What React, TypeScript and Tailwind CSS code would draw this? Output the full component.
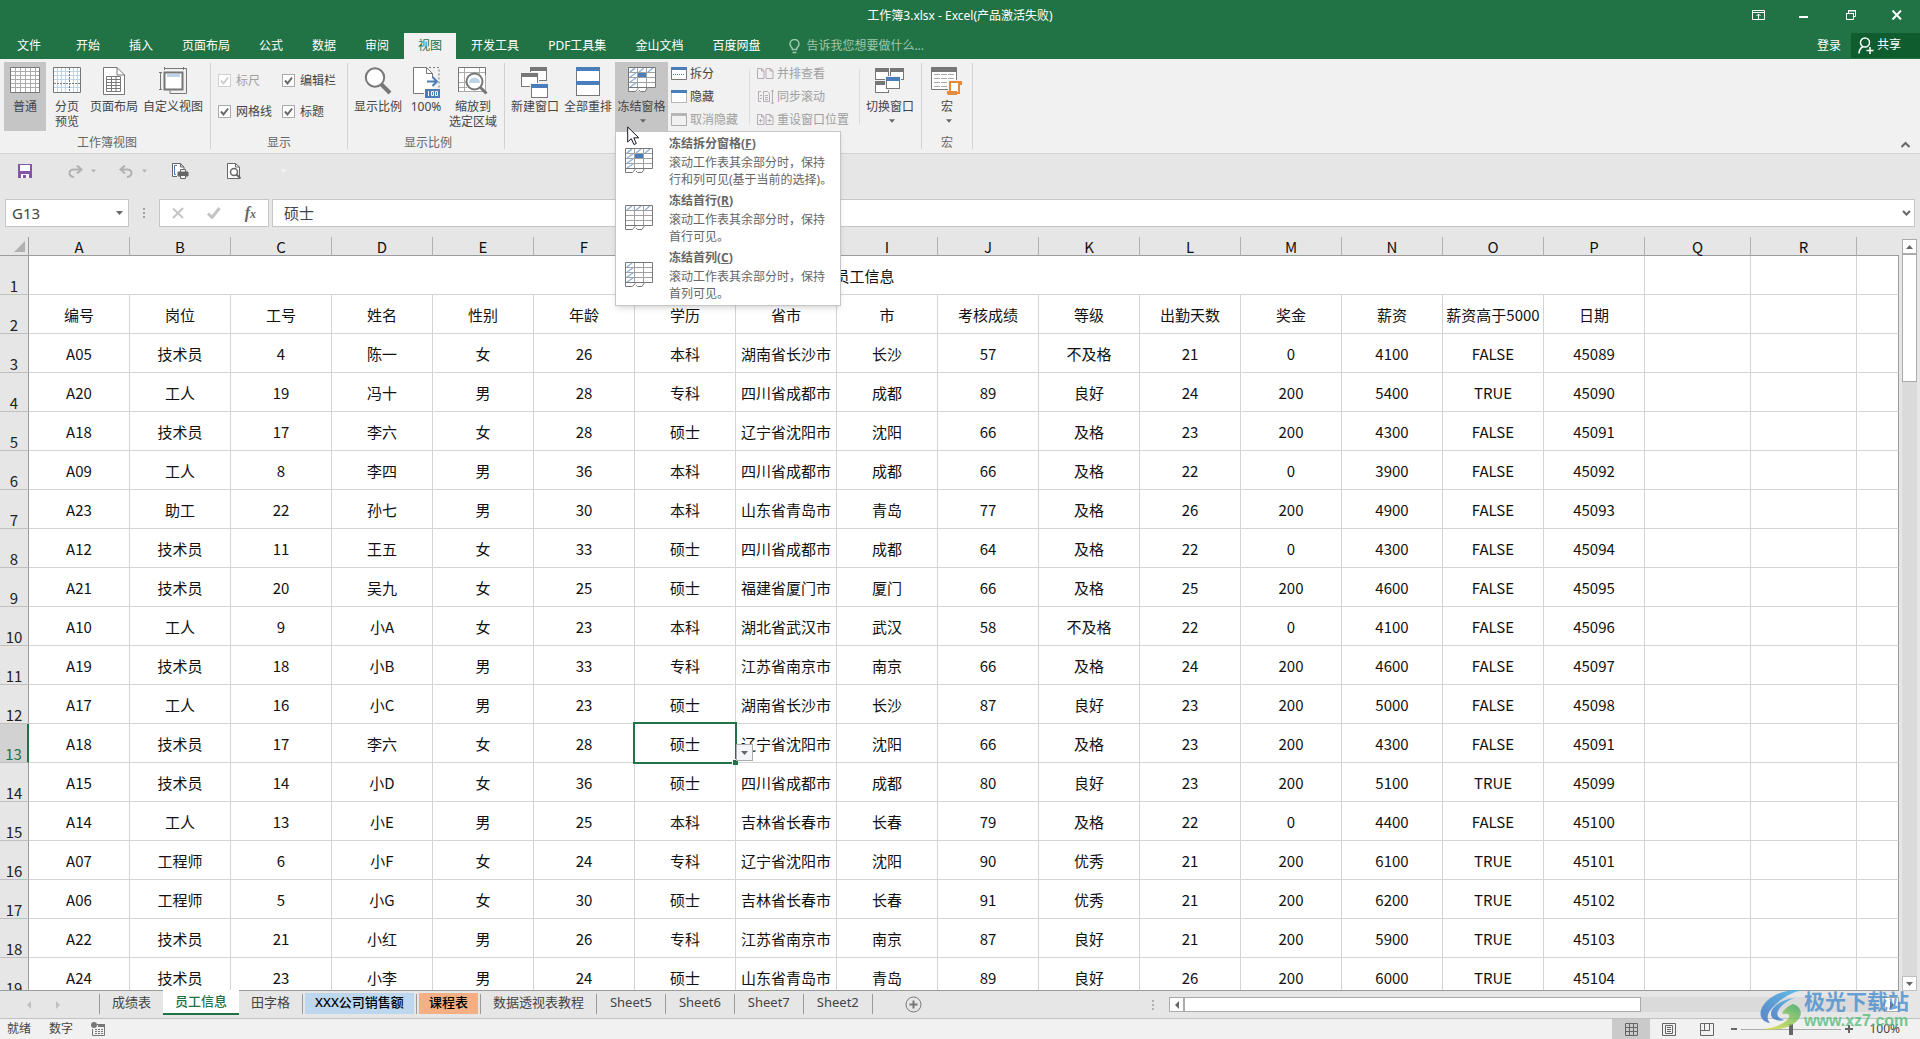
import type { ReactNode } from "react";

const menuTabs = ["开始", "插入", "页面布局", "公式", "数据", "审阅", "视图", "开发工具", "PDF工具集", "金山文档", "百度网盘"];

const headers = ["编号", "岗位", "工号", "姓名", "性别", "年龄", "学历", "省市", "市", "考核成绩", "等级", "出勤天数", "奖金", "薪资", "薪资高于5000", "日期"];

const records = [
  "A05,技术员,4,陈一,女,26,本科,湖南省长沙市,长沙,57,不及格,21,0,4100,FALSE,45089",
  "A20,工人,19,冯十,男,28,专科,四川省成都市,成都,89,良好,24,200,5400,TRUE,45090",
  "A18,技术员,17,李六,女,28,硕士,辽宁省沈阳市,沈阳,66,及格,23,200,4300,FALSE,45091",
  "A09,工人,8,李四,男,36,本科,四川省成都市,成都,66,及格,22,0,3900,FALSE,45092",
  "A23,助工,22,孙七,男,30,本科,山东省青岛市,青岛,77,及格,26,200,4900,FALSE,45093",
  "A12,技术员,11,王五,女,33,硕士,四川省成都市,成都,64,及格,22,0,4300,FALSE,45094",
  "A21,技术员,20,吴九,女,25,硕士,福建省厦门市,厦门,66,及格,25,200,4600,FALSE,45095",
  "A10,工人,9,小A,女,23,本科,湖北省武汉市,武汉,58,不及格,22,0,4100,FALSE,45096",
  "A19,技术员,18,小B,男,33,专科,江苏省南京市,南京,66,及格,24,200,4600,FALSE,45097",
  "A17,工人,16,小C,男,23,硕士,湖南省长沙市,长沙,87,良好,23,200,5000,FALSE,45098",
  "A18,技术员,17,李六,女,28,硕士,辽宁省沈阳市,沈阳,66,及格,23,200,4300,FALSE,45091",
  "A15,技术员,14,小D,女,36,硕士,四川省成都市,成都,80,良好,23,200,5100,TRUE,45099",
  "A14,工人,13,小E,男,25,本科,吉林省长春市,长春,79,及格,22,0,4400,FALSE,45100",
  "A07,工程师,6,小F,女,24,专科,辽宁省沈阳市,沈阳,90,优秀,21,200,6100,TRUE,45101",
  "A06,工程师,5,小G,女,30,硕士,吉林省长春市,长春,91,优秀,21,200,6200,TRUE,45102",
  "A22,技术员,21,小红,男,26,专科,江苏省南京市,南京,87,良好,21,200,5900,TRUE,45103",
  "A24,技术员,23,小李,男,24,硕士,山东省青岛市,青岛,89,良好,26,200,6000,TRUE,45104",
].map((line) => line.split(","));

const columns = "ABCDEFGHIJKLMNOPQR".split("");

const sheets = [
  { name: "成绩表", style: "px-[10px]" },
  { name: "员工信息", style: "" },
  { name: "田字格", style: "px-[10px]" },
  { name: "XXX公司销售额", style: "bg-[#bdd7ee] px-[10px] text-black font-medium" },
  { name: "课程表", style: "bg-[#f4b084] px-[10px] text-black font-medium" },
  { name: "数据透视表教程", style: "px-[10px]" },
  { name: "Sheet5", style: "px-[11px]" },
  { name: "Sheet6", style: "px-[11px]" },
  { name: "Sheet7", style: "px-[11px]" },
  { name: "Sheet2", style: "px-[11px]" },
];

/* ---------- icons ---------- */

function NormalIcon() {
  return (
    <svg width="30" height="26" viewBox="0 0 30 26" fill="none">
      <path d="M.5.5h29v25H.5z" fill="#fff" />
      <path d="M5.5 1v24M10.5 1v24M15.5 1v24M20.5 1v24M25.5 1v24M1 4.5h28M1 8.5h28M1 12.5h28M1 16.5h28M1 20.5h28" stroke="#ababab" />
      <path d="M.5.5h29v25H.5z" stroke="#777" />
    </svg>
  );
}

function PageBreakIcon() {
  return (
    <svg width="28" height="26" viewBox="0 0 28 26" fill="none">
      <path d="M.5.5h27v25H.5z" fill="#fff" />
      <path d="M4.5 1v24M8.5 1v24M12.5 1v24M20.5 1v24M24.5 1v24M1 4.5h26M1 8.5h26M1 12.5h26M1 20.5h26" stroke="#bcd3ea" />
      <path d="M16.5 1v24M1 16.5h26" stroke="#777" strokeDasharray="2 1" />
      <path d="M.5.5h27v25H.5z" stroke="#777" />
    </svg>
  );
}

function PageLayoutIcon() {
  return (
    <svg width="22" height="28" viewBox="0 0 22 28" fill="none" stroke="#777">
      <path d="M.5.5H14l7.5 7.5v19.500H.5z" fill="#fff" />
      <path d="M14 .5V8h7.500" />
      <path d="M3.500 9.500h14v15h-14zM8.500 9.500v15M13 9.500v15M3.500 12.500h14M3.500 15.500h14M3.500 18.500h14M3.500 21.500h14" />
    </svg>
  );
}

function CustomViewIcon() {
  return (
    <svg width="28" height="28" viewBox="0 0 28 28" fill="none" stroke="#777">
      <path d="M5 1.500h20M5.500 0v3M24.500 0v3M1.500 5v17M0 5.500h3M0 22.500h3" />
      <path d="M24 1.500h3.500v25H11v-3" />
      <path d="M5.500 5.500h18v17h-18z" fill="#fff" strokeWidth="2" />
      <path d="M8 7h13v3H8z" fill="#bcd3ea" stroke="none" />
    </svg>
  );
}

function ZoomIcon() {
  return (
    <svg width="28" height="28" viewBox="0 0 28 28" fill="none" stroke="#777">
      <circle cx="11" cy="10.500" r="9.200" strokeWidth="2" fill="#fff" />
      <path d="M17.500 17.500l8.500 8.500" strokeWidth="4" />
    </svg>
  );
}

function HundredIcon() {
  return (
    <svg width="28" height="32" viewBox="0 0 28 32" fill="none" stroke="#777">
      <path d="M1.500.5h13l6 6v20h-19z" fill="#fff" stroke="none" />
      <path d="M12 26.500H1.500V.5h13l6 6V11M14.500.5v6h6" />
      <path d="M17 .5h10v22" strokeDasharray="2 2" />
      <path d="M15 14.500h9M20.500 10l4.500 4.500-4.500 4.500" stroke="#4a7ebb" strokeWidth="2" />
      <path d="M13 22h15v9H13z" fill="#4a7ebb" stroke="none" />
      <path d="M16.500 24v5M19.500 24.500h2v4h-2zM23.500 24.500h2v4h-2z" stroke="#fff" />
    </svg>
  );
}

function ZoomSelectionIcon() {
  return (
    <svg width="30" height="28" viewBox="0 0 30 28" fill="none" stroke="#777">
      <path d="M.5.5h27v24H.5z" fill="#fff" stroke="#aaa" />
      <path d="M6.500 1v24M21.500 1v6M1 5.500h27M1 15.500h7M1 20.500h8" stroke="#aaa" />
      <path d="M.5 25V.5h27V8" />
      <circle cx="16.500" cy="14.500" r="8" fill="#fff" strokeWidth="2" />
      <path d="M11 16a5.500 5.500 0 0 1 11 0z" fill="#bcd3ea" stroke="none" />
      <path d="M22 20l6.500 6.500" strokeWidth="3" />
    </svg>
  );
}

function Window({ x, y, w, h, bar }: { x: number; y: number; w: number; h: number; bar: string }) {
  return (
    <g>
      <rect x={x + 0.5} y={y + 0.5} width={w - 1} height={h - 1} fill="#fff" stroke="#777" />
      <rect x={x} y={y} width={w} height="4" fill={bar} />
    </g>
  );
}

function NewWindowIcon() {
  return (
    <svg width="28" height="31" viewBox="0 0 28 31">
      <Window x={9} y={0} w={17} h={14} bar="#777" />
      <rect x="0" y="5" width="18" height="15" fill="#f1f1f1" />
      <Window x={0} y={6} w={17} h={14} bar="#777" />
      <rect x="9" y="16" width="18" height="15" fill="#f1f1f1" />
      <Window x={10} y={17} w={17} h={14} bar="#4a7ebb" />
    </svg>
  );
}

function ArrangeIcon() {
  return (
    <svg width="24" height="29" viewBox="0 0 24 29">
      <Window x={0} y={0} w={24} h={15} bar="#4a7ebb" />
      <Window x={0} y={14} w={24} h={15} bar="#4a7ebb" />
    </svg>
  );
}

function SwitchIcon() {
  return (
    <svg width="30" height="26" viewBox="0 0 30 26">
      <Window x={0} y={1} w={14} h={12} bar="#777" />
      <Window x={15} y={1} w={14} h={12} bar="#777" />
      <Window x={0} y={14} w={14} h={12} bar="#777" />
      <rect x="10" y="9" width="16" height="14" fill="#f1f1f1" />
      <Window x={11} y={10} w={14} h={12} bar="#4a7ebb" />
    </svg>
  );
}

function MacroIcon() {
  return (
    <svg width="32" height="29" viewBox="0 0 32 29" fill="none">
      <path d="M.5.5h25v22H.5z" fill="#fff" stroke="#777" />
      <path d="M0 0h26v5H0z" fill="#777" />
      <path d="M3 7.500h20M3 11.500h20M3 15.500h13M3 19.500h13" stroke="#aaa" strokeDasharray="6 1" />
      <path d="M17 13h13v11H17z" fill="#f1f1f1" />
      <path d="M19 15h9v11h-9z" fill="#fff" stroke="#e68b3c" strokeWidth="2" />
      <path d="M28 14h3v4h-2M16 24h10v4H17l-1-1z" fill="#e68b3c" />
    </svg>
  );
}

function FreezeIcon({ rows, cols }: { rows?: boolean; cols?: boolean }) {
  return (
    <svg width="28" height="25" viewBox="0 0 28 25" fill="none">
      <path d="M.5.5h27v20H19l-2 4h-5l-1.500-1-2 1H.5z" fill="#fff" />
      <path d="M9.500 1v20M18.500 1v20M1 5.500h27M1 10.500h27M1 15.500h27" stroke="#a0a0a0" />
      {rows && <path d="M2 5l5-4M11 5l5-4M20 5l5-4" stroke="#8fb2d9" strokeWidth="1.500" />}
      {cols && <path d="M2 5l5-4M2 10l6-4M2 15l6-4M2 20l6-4" stroke="#8fb2d9" strokeWidth="1.500" />}
      {rows && cols && <path d="M10 6h8v4h-8z" fill="#4a7ebb" />}
      <path d="M.5 24.500V.5h27v20H19.500l-2.500 4h-4.500l-1.500-1.500M.5 20.500h19M.5 24.500h7l3-3.500" stroke="#777" />
    </svg>
  );
}

function SmallWindowIcon({ kind }: { kind: string }) {
  const bar = kind === "unhide" ? "#b5b5b5" : "#4a7ebb";
  return (
    <svg width="16" height="13" viewBox="0 0 16 13" fill="none">
      <path d="M.5.5h15v12H.5z" fill={kind === "unhide" ? "#f1f1f1" : "#fff"} stroke={kind === "unhide" ? "#aaa" : "#777"} strokeDasharray={kind === "hide" ? "1 1" : undefined} />
      <path d="M0 0h16v3H0z" fill={bar} />
      {kind === "split" && <path d="M2 7.500h12" stroke="#4a7ebb" strokeDasharray="1 1" />}
    </svg>
  );
}

function PagesIcon({ kind }: { kind: string }) {
  return (
    <svg width="17" height="14" viewBox="0 0 17 14" fill="none" stroke="#b3acb3">
      {kind === "sync" ? (
        <>
          <path d="M4 1.500H1.500v10H4M6.500 1.500h4l2 2v8h-6zM8 5.500h3M8 7.500h3M8 9.500h3M3 5.500h2M3 8.500h2" />
          <path d="M15.500 0v14M14 1.500l1.500-1.500 1 1.500M14 12.500l1.500 1.500 1-1.500" />
        </>
      ) : (
        <path d="M.5 1.500h4l2.500 2v8H.5zM9 1.500h4l3 2v8H9zM4.500 1.500v2.500H7M13 1.500v2.500h3" />
      )}
      {kind === "reset" && <path d="M2 7.500h3.500M3.500 6v3.500M10.500 7.500h4M12.500 6v3.500" />}
    </svg>
  );
}

function Arrow({ className = "text-[#666]", up }: { className?: string; up?: boolean }) {
  return (
    <svg width="7" height="4" viewBox="0 0 7 4" className={className} fill="currentColor">
      <path d={up ? "M0 4h7L3.500 0z" : "M0 0h7L3.500 4z"} />
    </svg>
  );
}

/* ---------- ribbon ---------- */

function Group({ label, className, children }: { label?: string; className: string; children: ReactNode }) {
  return (
    <div className={`relative mt-1 flex h-[86px] shrink-0 flex-col border-r border-[#d2d2d2] ${className}`}>
      <div className="-mt-px flex h-[69px] shrink-0">{children}</div>
      {label && <div className="-mb-1 pt-1 text-center leading-4 text-[#666]">{label}</div>}
    </div>
  );
}

interface BigButtonProps {
  icon: ReactNode;
  lines: string[];
  width: string;
  active?: boolean;
  arrow?: boolean;
}

function BigButton({ icon, lines, width, active, arrow }: BigButtonProps) {
  return (
    <button type="button" className={`flex h-[69px] shrink-0 flex-col items-center whitespace-nowrap ${width} ${active ? "bg-[#c5c5c5]" : ""}`}>
      <span className="flex h-[37px] items-start pt-[5px]">{icon}</span>
      {lines.map((line) => (
        <span key={line} className="leading-[15px]">{line}</span>
      ))}
      {arrow && <span className="flex h-[14px] items-center pl-[3px]"><Arrow className="w-[6px] text-[#666]" /></span>}
    </button>
  );
}

function Check({ label, disabled, width }: { label: string; disabled?: boolean; width: string }) {
  return (
    <label className={`flex h-[31px] items-center gap-[5px] whitespace-nowrap ${width} ${disabled ? "text-[#a0a0a0]" : ""}`}>
      <span className="relative flex h-[13px] w-[13px]">
        <input type="checkbox" defaultChecked disabled={disabled} className={`h-[13px] w-[13px] appearance-none border bg-white ${disabled ? "border-[#d0d0d0]" : "border-[#ababab]"}`} />
        <svg className="pointer-events-none absolute inset-0" width="13" height="13" viewBox="0 0 13 13" fill="none" stroke={disabled ? "#ccc" : "#666"} strokeWidth="2">
          <path d="M3 6.500L5.500 9.500L10 3.500" />
        </svg>
      </span>
      {label}
    </label>
  );
}

function SmallButton({ icon, label, disabled }: { icon: ReactNode; label: string; disabled?: boolean }) {
  return (
    <button type="button" disabled={disabled} className={`flex h-[23px] shrink-0 items-center gap-[3px] whitespace-nowrap ${disabled ? "text-[#a0a0a0]" : ""}`}>
      {icon}
      {label}
    </button>
  );
}

function FreezeMenu() {
  const items = [
    { name: "冻结拆分窗格", hot: "F", desc: ["滚动工作表其余部分时，保持", "行和列可见(基于当前的选择)。"], rows: true, cols: true },
    { name: "冻结首行", hot: "R", desc: ["滚动工作表其余部分时，保持", "首行可见。"], rows: true, cols: false },
    { name: "冻结首列", hot: "C", desc: ["滚动工作表其余部分时，保持", "首列可见。"], rows: false, cols: true },
  ];
  return (
    <div role="menu" className="absolute left-[110px] top-[68px] z-20 w-[226px] border border-[#c6c6c6] bg-white pb-0.5 shadow-md">
      {items.map((item) => (
        <button type="button" role="menuitem" key={item.name} className="flex h-[57px] w-full pl-[9px] pt-[3px] text-left text-[#666]">
          <span className="w-11 shrink-0 pt-[13px]">
            <FreezeIcon rows={item.rows} cols={item.cols} />
          </span>
          <span className="whitespace-nowrap">
            <span className="mb-px block font-bold leading-[18px]">
              {item.name}(<u>{item.hot}</u>)
            </span>
            {item.desc.map((line) => (
              <span key={line} className="block leading-[17px]">{line}</span>
            ))}
          </span>
        </button>
      ))}
      {/* mouse pointer */}
      <svg className="absolute left-[11px] -top-[6px]" width="13" height="20" viewBox="0 0 13 20" fill="#fff" stroke="#1a1a2a">
        <path d="M.7 1v15l3.600-3.300 2.600 5.800 2.400-1-2.500-5.700h5z" />
      </svg>
    </div>
  );
}

function Ribbon() {
  return (
    <div className="flex h-[95px] border-b border-[#d2d2d2] bg-[#f1f1f1] text-xs text-[#444]">
      <Group label="工作簿视图" className="w-[211px] pl-1">
        <BigButton icon={<NormalIcon />} lines={["普通"]} width="w-[42px]" active />
        <BigButton icon={<PageBreakIcon />} lines={["分页", "预览"]} width="w-[42px]" />
        <BigButton icon={<PageLayoutIcon />} lines={["页面布局"]} width="w-[52px]" />
        <BigButton icon={<CustomViewIcon />} lines={["自定义视图"]} width="w-[66px]" />
      </Group>
      <Group label="显示" className="w-[137px]">
        <div className="flex flex-wrap content-start pl-[7px] pt-[3px]">
          <Check label="标尺" width="w-16" disabled />
          <Check label="编辑栏" width="w-16" />
          <Check label="网格线" width="w-16" />
          <Check label="标题" width="w-16" />
        </div>
      </Group>
      <Group label="显示比例" className="w-[157px] pl-1">
        <BigButton icon={<ZoomIcon />} lines={["显示比例"]} width="w-[52px]" />
        <BigButton icon={<HundredIcon />} lines={["100%"]} width="w-11" />
        <BigButton icon={<ZoomSelectionIcon />} lines={["缩放到", "选定区域"]} width="w-[50px]" />
      </Group>
      <Group className="w-[417px] pl-1">
        <BigButton icon={<NewWindowIcon />} lines={["新建窗口"]} width="w-[52px]" />
        <BigButton icon={<ArrangeIcon />} lines={["全部重排"]} width="w-[54px]" />
        <BigButton icon={<FreezeIcon rows cols />} lines={["冻结窗格"]} width="w-[53px]" active arrow />
        <div className="flex w-[81px] flex-col pl-[3px]">
          <SmallButton icon={<SmallWindowIcon kind="split" />} label="拆分" />
          <SmallButton icon={<SmallWindowIcon kind="hide" />} label="隐藏" />
          <SmallButton icon={<SmallWindowIcon kind="unhide" />} label="取消隐藏" disabled />
        </div>
        <div className="my-[7px] flex w-[111px] flex-col justify-center border-x border-[#dcdcdc] pl-[7px]">
          <SmallButton icon={<PagesIcon kind="side" />} label="并排查看" disabled />
          <SmallButton icon={<PagesIcon kind="sync" />} label="同步滚动" disabled />
          <SmallButton icon={<PagesIcon kind="reset" />} label="重设窗口位置" disabled />
        </div>
        <div className="ml-1">
          <BigButton icon={<SwitchIcon />} lines={["切换窗口"]} width="w-[52px]" arrow />
        </div>
        <FreezeMenu />
      </Group>
      <Group label="宏" className="w-[51px]">
        <BigButton icon={<MacroIcon />} lines={["宏"]} width="w-[50px]" arrow />
      </Group>
      <button type="button" aria-label="折叠功能区" className="mb-1 ml-auto mr-[9px] self-end p-px">
        <svg width="9" height="7" viewBox="0 0 9 7" fill="none" stroke="#666" strokeWidth="2">
          <path d="M.5 6L4.500 2L8.500 6" />
        </svg>
      </button>
    </div>
  );
}

/* ---------- top bars ---------- */

function TitleBar() {
  return (
    <div className="grid h-[33px] grid-cols-[1fr_auto_1fr] items-start text-xs leading-8 text-white">
      <span />
      <h1>工作簿3.xlsx - Excel(产品激活失败)</h1>
      <div className="flex h-[30px] items-center justify-end pr-[17px]">
        <button type="button" aria-label="功能区显示选项" className="mr-[29px] p-1">
          <svg width="13" height="10" viewBox="0 0 13 10" fill="none" stroke="#fff">
            <path d="M.5.5h12v9H.5zM1 2.500h11M6.500 4v5M4.500 6l2-2 2 2" />
          </svg>
        </button>
        <button type="button" aria-label="最小化" className="mr-[33px] px-px pt-1">
          <svg width="9" height="2" viewBox="0 0 9 2"><path d="M0 0h9v2H0z" fill="#fff" /></svg>
        </button>
        <button type="button" aria-label="还原" className="mr-[31px] p-1">
          <svg width="10" height="10" viewBox="0 0 10 10" fill="none" stroke="#fff">
            <path d="M2.500 3V1h7v5.500H8M2 .5h8M0 3.500h8M.5 4v5.500h7V4" />
          </svg>
        </button>
        <button type="button" aria-label="关闭">
          <svg width="12" height="10" viewBox="0 0 12 10" fill="none" stroke="#fff" strokeWidth="2">
            <path d="M1.500.5l8.500 9M10 .5l-8.500 9" />
          </svg>
        </button>
      </div>
    </div>
  );
}

function MenuBar() {
  return (
    <div className="flex h-[26px] text-xs leading-6 text-white">
      <button type="button" className="mr-1 w-[58px]">文件</button>
      <div className="flex gap-px">
        {menuTabs.map((tab) => (
          <button type="button" key={tab} className={`whitespace-nowrap px-3.5 ${tab === "视图" ? "bg-[#f1f1f1] text-[#217346]" : ""}`}>{tab}</button>
        ))}
      </div>
      <div className="ml-[15px] flex items-center gap-[6px]">
        <svg width="11" height="15" viewBox="0 0 11 15" fill="none" stroke="#9fc7b0" strokeWidth="1.500">
          <path d="M3.500 10.500c0-2-2.500-3-2.500-5.500a4.500 4.500 0 0 1 9 0c0 2.500-2.500 3.500-2.500 5.500zM3.500 13.500h4" />
        </svg>
        <input aria-label="告诉我" placeholder="告诉我您想要做什么..." className="w-40 bg-transparent placeholder-[#9fc7b0] outline-none" />
      </div>
      <div className="ml-auto flex">
        <button type="button" className="px-[10px]">登录</button>
        <button type="button" className="mb-px flex w-[69px] items-center gap-[3px] bg-[#0f5c2f] pl-[7px]">
          <svg width="16" height="17" viewBox="0 0 16 17" fill="none" stroke="#fff" strokeWidth="1.500">
            <circle cx="7" cy="5.500" r="4.500" />
            <path d="M1 16.500c0-3 1.500-5.500 4-7M8.500 13.500h7M12 10v7" />
          </svg>
          <span className="pb-[2px]">共享</span>
        </button>
      </div>
    </div>
  );
}

function QuickAccess() {
  return (
    <div className="flex h-[45px] items-center pb-[11px] pl-[18px]">
      <button type="button" aria-label="保存" className="mr-9">
        <svg width="14" height="14" viewBox="0 0 14 14">
          <path d="M0 0h14v14H0z" fill="#8555a8" />
          <path d="M2 1h10v6H2zM3 10h8v4H3z" fill="#fff" />
          <path d="M5 11h3v3H5z" fill="#8555a8" />
        </svg>
      </button>
      <button type="button" aria-label="恢复" className="mr-[23px] flex items-center gap-2">
        <svg width="15" height="13" viewBox="0 0 15 13" fill="none" stroke="#b1b1b1" strokeWidth="2">
          <path d="M6 12C0 11.500 0 4.500 6 4.500h7M9 .5l4.500 4L9 8.500" />
        </svg>
        <Arrow className="w-[5px] text-[#b1b1b1]" />
      </button>
      <button type="button" aria-label="撤消" className="mr-[25px] flex items-center gap-2">
        <svg width="15" height="13" viewBox="0 0 15 13" fill="none" stroke="#b1b1b1" strokeWidth="2">
          <path d="M8 12c6-.5 6-7.500 0-7.500H2M6 .5l-4.500 4L6 8.500" />
        </svg>
        <Arrow className="w-[5px] text-[#b1b1b1]" />
      </button>
      <button type="button" aria-label="快速打印" className="mr-[38px]">
        <svg width="17" height="16" viewBox="0 0 17 16" fill="none" stroke="#666">
          <path d="M5 13.500H.5V.5h8L12 4v2M8.500.5V4H12" fill="#fff" />
          <path d="M5 2.500H2.500v9H4" stroke="#4a7ebb" />
          <path d="M8.500 9V6.500h5V9" fill="#fff" />
          <path d="M6 9h10v4H6z" fill="#666" />
          <path d="M8.500 12.500h5v3h-5z" fill="#fff" />
        </svg>
      </button>
      <button type="button" aria-label="打印预览" className="mr-[39px]">
        <svg width="15" height="16" viewBox="0 0 15 16" fill="none" stroke="#666">
          <path d="M.5.5h8L12.500 4v11.500H.5z" fill="#fff" />
          <path d="M8.500.5V4h4" />
          <circle cx="7" cy="9" r="3.500" fill="#fff" strokeWidth="1.500" />
          <path d="M9.500 11.500l4 4" strokeWidth="2" />
        </svg>
      </button>
      <Arrow className="w-[5px] text-[#f6f6f6]" />
    </div>
  );
}

function FormulaBar() {
  return (
    <div className="flex h-[28px] px-[5px] text-[15px] text-[#444]">
      <div className="flex w-[124px] items-center border border-[#c6c6c6] bg-white pr-[5px]">
        <input aria-label="名称框" defaultValue="G13" className="min-w-0 flex-1 pl-[6px] outline-none" />
        <Arrow />
      </div>
      <div className="flex w-[30px] flex-col items-center justify-center gap-[2px]">
        <i className="h-[2px] w-[2px] bg-[#a0a0a0]" />
        <i className="h-[2px] w-[2px] bg-[#a0a0a0]" />
        <i className="h-[2px] w-[2px] bg-[#a0a0a0]" />
      </div>
      <div className="flex w-[110px] items-center justify-between border border-[#c6c6c6] bg-white px-3">
        <button type="button" aria-label="取消">
          <svg width="12" height="12" viewBox="0 0 12 12" fill="none" stroke="#c4c4c4" strokeWidth="2"><path d="M1 1.500l10 9.500M11 1L1 11" /></svg>
        </button>
        <button type="button" aria-label="输入">
          <svg width="14" height="12" viewBox="0 0 14 12" fill="none" stroke="#c4c4c4" strokeWidth="3"><path d="M1 6.500l4 4L12.500 1" /></svg>
        </button>
        <button type="button" className="font-['Liberation_Serif',serif] text-[16px] font-bold italic leading-4 text-[#666]">
          f<span className="text-[12px]">x</span>
        </button>
      </div>
      <div className="ml-[3px] flex flex-1 items-center border border-[#c6c6c6] bg-white pr-[3px]">
        <input aria-label="编辑栏" defaultValue="硕士" className="min-w-0 flex-1 pl-[11px] outline-none" />
        <svg width="9" height="6" viewBox="0 0 9 6" fill="none" stroke="#666" strokeWidth="2"><path d="M1 1l3.500 3.500L8 1" /></svg>
      </div>
    </div>
  );
}

/* ---------- grid ---------- */

const cell = "border-b border-r border-[#d4d4d4] px-0 pb-0 pt-px text-center font-normal whitespace-nowrap";
const lastCell = "border-b border-r border-b-[#d4d4d4] border-r-[#9b9b9b] p-0";

function RowHead({ n }: { n: number }) {
  return (
    <th scope="row" className={`border-b border-b-[#c0c0c0] px-0 pb-px pt-0 text-center align-bottom font-normal leading-none ${n === 13 ? "border-r-2 border-r-[#217346] bg-[#d2d2d2] text-[#217346]" : "border-r border-r-[#9b9b9b] bg-[#e6e6e6] text-[#222]"}`}>
      {n}
    </th>
  );
}

function SelectedCell({ value }: { value: string }) {
  return (
    <td className={`${cell} relative`}>
      {value}
      <span className="absolute -inset-[2px] border-2 border-[#217346]" />
      <span className="absolute -bottom-[3px] -right-[3px] h-[6px] w-[6px] border-l border-t border-white bg-[#217346]" />
      <button type="button" aria-label="选择列表" className="absolute left-full top-5 z-10 ml-px flex h-[17px] w-[17px] items-center justify-center border border-[#ababab] bg-[#f3f5f8]">
        <Arrow />
      </button>
    </td>
  );
}

function Sheet() {
  return (
    <div className="min-w-0 flex-1 overflow-hidden border-b border-[#9b9b9b] pt-[10px]">
      <table className="w-full table-fixed border-separate border-spacing-0 bg-white text-[15px] leading-5 text-[#111]">
        <colgroup>
          <col className="w-[29px]" />
          {columns.map((c) => (
            <col key={c} className={c > "P" ? "w-[106px]" : "w-[101px]"} />
          ))}
          <col />
        </colgroup>
        <thead>
          <tr className="h-[19px] bg-[#e6e6e6]">
            <th className="border-b border-r border-[#9b9b9b] p-0">
              <svg className="ml-auto mr-[3px]" width="11" height="11" viewBox="0 0 11 11"><path d="M11 0v11H0z" fill="#b1b1b1" /></svg>
            </th>
            {columns.map((c) => (
              <th key={c} scope="col" className={`h-[19px] border-b border-r border-b-[#9b9b9b] border-r-[#b1b1b1] p-0 text-center align-bottom font-normal leading-4 ${c === "G" ? "bg-[#d2d2d2] text-[#217346]" : ""}`}>{c}</th>
            ))}
            <th className="border-b border-[#9b9b9b] p-0" />
          </tr>
        </thead>
        <tbody>
          <tr className="h-[39px]">
            <RowHead n={1} />
            <td colSpan={16} className={cell}>XXX公司员工信息</td>
            <td className={cell} />
            <td className={cell} />
            <td className={lastCell} />
          </tr>
          {[headers, ...records].map((row, r) => (
            <tr key={r} className="h-[39px]">
              <RowHead n={r + 2} />
              {row.map((value, c) =>
                r === 11 && c === 6 ? <SelectedCell key={c} value={value} /> : <td key={c} className={cell}>{value}</td>
              )}
              <td className={cell} />
              <td className={cell} />
              <td className={lastCell} />
            </tr>
          ))}
        </tbody>
      </table>
    </div>
  );
}

function VerticalScroll() {
  return (
    <div className="mx-[3px] mt-3 flex w-[15px] flex-col bg-[#dadada]">
      <button type="button" aria-label="向上滚动" className="flex h-[15px] items-center justify-center border border-[#ababab] bg-white"><Arrow up /></button>
      <div className="h-[128px] border border-[#ababab] bg-white" />
      <button type="button" aria-label="向下滚动" className="mt-auto flex h-[15px] items-center justify-center border border-[#c0c0c0] bg-white"><Arrow /></button>
    </div>
  );
}

function SideArrow({ right, className }: { right?: boolean; className: string }) {
  return (
    <svg width="4" height="8" viewBox="0 0 4 8" className={className} fill="currentColor">
      <path d={right ? "M0 0v8l4-4z" : "M4 0v8L0 4z"} />
    </svg>
  );
}

function SheetTabs() {
  return (
    <div className="flex h-[28px] border-b border-[#c0c0c0] text-[13px] text-[#444]">
      <div className="flex w-[100px] items-center gap-[25px] pl-[27px]">
        <SideArrow className="text-[#c0c0c0]" />
        <SideArrow right className="text-[#c0c0c0]" />
      </div>
      {sheets.map((sheet, i) =>
        i === 1 ? (
          <button type="button" key={sheet.name} className="-mt-px h-[25px] w-[76px] border-b-2 border-[#217346] bg-white pb-[2px] font-medium leading-5 text-[#217346]">{sheet.name}</button>
        ) : (
          <div key={sheet.name} className={`my-[3px] flex h-5 border-[#9b9b9b] px-[2px] ${i === 0 ? "-ml-px border-l" : "border-r"}`}>
            <button type="button" className={`-mt-px whitespace-nowrap pb-[3px] leading-[17px] ${sheet.style}`}>{sheet.name}</button>
          </div>
        )
      )}
      <button type="button" aria-label="新工作表" className="ml-[32px]">
        <svg width="17" height="17" viewBox="0 0 17 17" fill="none" stroke="#777">
          <circle cx="8.500" cy="8.500" r="7.500" />
          <path d="M4.500 8.500h8M8.500 4.500v8" strokeWidth="2" />
        </svg>
      </button>
      <div className="ml-auto mt-[6px] flex h-[15px] w-[768px] shrink-0">
        <div className="flex w-[17px] flex-col justify-center gap-[2px]">
          <i className="h-[2px] w-[2px] bg-[#b0b0b0]" />
          <i className="h-[2px] w-[2px] bg-[#b0b0b0]" />
          <i className="h-[2px] w-[2px] bg-[#b0b0b0]" />
        </div>
        <button type="button" aria-label="向左滚动" className="flex w-[15px] items-center justify-center border border-[#ababab] bg-white"><SideArrow className="text-[#666]" /></button>
        <div className="w-[457px] border border-[#ababab] bg-white" />
        <div className="flex-1 bg-[#dadada]" />
        <button type="button" aria-label="向右滚动" className="mr-[21px] flex w-[15px] items-center justify-center border border-[#ababab] bg-white"><SideArrow right className="text-[#666]" /></button>
      </div>
    </div>
  );
}

function StatusBar() {
  return (
    <div className="flex h-5 items-center bg-[#f1f1f1] text-xs leading-5 text-[#444]">
      <span className="ml-[7px] w-[42px]">就绪</span>
      <span className="w-[42px]">数字</span>
      <svg width="14" height="14" viewBox="0 0 14 14" fill="none" stroke="#777">
        <path d="M6 2.500h7.500v11H1.500V7" />
        <path d="M7 2h7v3H7z" fill="#777" stroke="none" />
        <circle cx="3" cy="3" r="3" fill="#777" stroke="none" />
        <path d="M4 7.500h8M4 9.500h8M4 11.500h8" strokeDasharray="2 1" />
      </svg>
      <div className="ml-auto flex h-5 items-center">
        <button type="button" aria-label="普通" className="flex h-5 w-[38px] items-center justify-center bg-[#cacaca]">
          <svg width="13" height="13" viewBox="0 0 13 13" fill="none" stroke="#666"><path d="M.5.5h12v12H.5zM4.500 0v13M8.500 0v13M0 4.500h13M0 8.500h13" /></svg>
        </button>
        <button type="button" aria-label="页面布局" className="flex h-5 w-[38px] items-center justify-center">
          <svg width="14" height="13" viewBox="0 0 14 13" fill="none" stroke="#666"><path d="M.5.5h13v12H.5zM3.500 2.500h7v8h-7zM5 4.500h4M5 6.500h4M5 8.500h4" /></svg>
        </button>
        <button type="button" aria-label="分页预览" className="flex h-5 w-[38px] items-center justify-center">
          <svg width="14" height="13" viewBox="0 0 14 13" fill="none" stroke="#666"><path d="M.5.5h13v12H.5zM4.500 0v7.500M9.500 0v7.500M0 7.500h9.500" /></svg>
        </button>
        <button type="button" aria-label="缩小" className="ml-[5px] h-[2px] w-[6px] bg-[#666]" />
        <input type="range" aria-label="缩放" min={0} max={100} defaultValue={50} className="mx-1 h-px w-[100px] appearance-none bg-[#ababab] [&::-webkit-slider-thumb]:h-[11px] [&::-webkit-slider-thumb]:w-1 [&::-webkit-slider-thumb]:appearance-none [&::-webkit-slider-thumb]:bg-[#666]" />
        <button type="button" aria-label="放大">
          <svg width="8" height="8" viewBox="0 0 8 8" stroke="#666" strokeWidth="2"><path d="M0 4h8M4 0v8" /></svg>
        </button>
        <span className="ml-4 mr-[20px]">100%</span>
      </div>
    </div>
  );
}

function Watermark() {
  return (
    <div className="pointer-events-none absolute bottom-[9px] right-[10px] z-30 flex items-center gap-[2px] opacity-80">
      <svg width="42" height="40" viewBox="0 0 42 40" fill="none">
        <defs>
          <linearGradient id="wave" x1="0" y1="1" x2="1" y2="0">
            <stop offset="0" stopColor="#3c6fc0" />
            <stop offset="1" stopColor="#3fb4ea" />
          </linearGradient>
          <linearGradient id="leaf" x1="0" y1="1" x2="1" y2="0">
            <stop offset="0" stopColor="#f0e63c" />
            <stop offset="1" stopColor="#35a867" />
          </linearGradient>
        </defs>
        <path d="M42 0C24-1 6 6 1 20c-2 7 2 12 9 13-4-4-3-10 3-16C20 9 30 3 42 0z" fill="url(#wave)" />
        <path d="M34 8C22 9 11 17 11 24c0 5 6 8 14 6-6-1-9-4-7-9 2-5 9-10 16-13z" fill="url(#wave)" />
        <path d="M33 14c9 3 10 11 4 17-7 7-20 10-35 8 12-1 22-5 26-10 3-4 1-6-6-5 2-5 6-8 11-10z" fill="url(#leaf)" />
      </svg>
      <div className="w-[106px] whitespace-nowrap">
        <div className="text-[21px] font-bold leading-[21px] text-[#4a8fd0]">极光下载站</div>
        <div className="font-['Liberation_Sans',sans-serif] text-base font-bold leading-[18px] text-[#58bd7c]">www.xz7.com</div>
      </div>
    </div>
  );
}

export default function App() {
  return (
    <div className="relative flex h-screen flex-col overflow-hidden bg-[#e6e6e6] font-['Noto_Sans','Noto_Sans_CJK_SC',sans-serif]">
      <header className="bg-[#217346]">
        <TitleBar />
        <MenuBar />
      </header>
      <Ribbon />
      <QuickAccess />
      <FormulaBar />
      <main className="flex min-h-0 flex-1 font-['Noto_Sans_CJK_SC',sans-serif]">
        <Sheet />
        <VerticalScroll />
      </main>
      <SheetTabs />
      <StatusBar />
      <Watermark />
    </div>
  );
}
